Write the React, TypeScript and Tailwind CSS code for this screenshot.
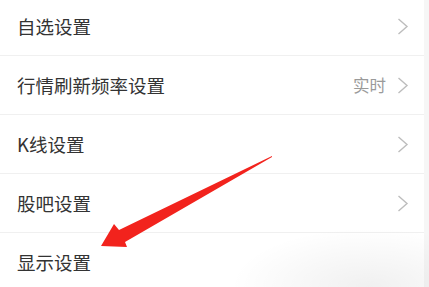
const rows = [
  { label: "自选设置", chevron: true },
  { label: "行情刷新频率设置", value: "实时", chevron: true },
  { label: "K线设置", chevron: true },
  { label: "股吧设置", chevron: true },
  { label: "显示设置", chevron: false },
];

function Chevron() {
  return (
    <svg width="12" height="17" viewBox="0 0 12 17" className="text-[#bdbdbd]">
      <polyline points="1.5,1 10,8.5 1.5,16" fill="none" stroke="currentColor" strokeWidth="1.4" />
    </svg>
  );
}

export default function App() {
  return (
    <div
      className="relative w-[429px] h-[287px] overflow-hidden bg-white flex"
      style={{ fontFamily: '"Noto Sans CJK SC", "Noto Sans", sans-serif' }}
    >
      <div className="flex-1 -mt-[3px]">
        {rows.map((r, i) => (
          <div
            key={r.label}
            className={`h-[59px] flex items-center pl-[17px] pr-[15px] ${i < rows.length - 1 ? "border-b border-[#f0f0f0]" : ""}`}
          >
            <span className="text-[18.5px] text-[#333] leading-none">{r.label}</span>
            <div className="ml-auto flex items-center gap-[11px]">
              {r.value && <span className="text-[16.5px] text-[#9a9a9a] leading-none">{r.value}</span>}
              {r.chevron && <Chevron />}
            </div>
          </div>
        ))}
      </div>
      <div className="w-[5px] bg-[#f6f6f6]" />

      <div className="absolute right-0 bottom-0 w-[200px] h-[60px] bg-[radial-gradient(ellipse_at_70%_100%,rgba(0,0,0,0.06),transparent_70%)]" />

      <svg className="absolute inset-0" width="429" height="287" viewBox="0 0 429 287">
        <polygon
          points="272,156 119,230 114,224 101,246 127,247 125,242 272,157"
          fill="#f2231d"
        />
      </svg>
    </div>
  );
}
